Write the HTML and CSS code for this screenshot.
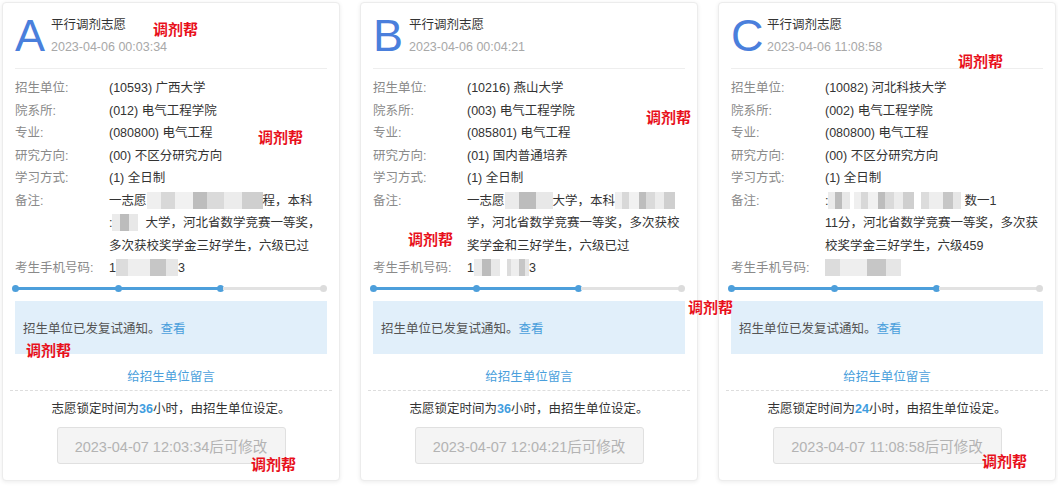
FILE: index.html
```html
<!DOCTYPE html>
<html lang="zh">
<head>
<meta charset="utf-8">
<title>平行调剂志愿</title>
<link rel="stylesheet" href="styles.css">
</head>
<body>
<div class="page">
  <div class="cards">
    <div class="card">
      <div class="head">
        <div class="letter">A</div>
        <div class="head-text">
          <div class="title">平行调剂志愿</div>
          <div class="date">2023-04-06 00:03:34</div>
        </div>
      </div>
      <div class="rows">
        <div class="row"><span class="lab">招生单位:</span><span class="val">(10593) 广西大学</span></div>
        <div class="row"><span class="lab">院系所:</span><span class="val">(012) 电气工程学院</span></div>
        <div class="row"><span class="lab">专业:</span><span class="val">(080800) 电气工程</span></div>
        <div class="row"><span class="lab">研究方向:</span><span class="val">(00) 不区分研究方向</span></div>
        <div class="row"><span class="lab">学习方式:</span><span class="val">(1) 全日制</span></div>
        <div class="row"><span class="lab">备注:</span><span class="val">一志愿<span class="blur w116 m1"></span>程，本科<br>:<span class="blur w26 m2"></span>&nbsp; 大学，河北省数学竞赛一等奖，<br>多次获校奖学金三好学生，六级已过</span></div>
        <div class="row"><span class="lab">考生手机号码:</span><span class="val">1<span class="blur w62 m3"></span>3</span></div>
      </div>
      <div class="steps"><span class="dot on"></span><span class="seg on"></span><span class="dot on"></span><span class="seg on"></span><span class="dot on"></span><span class="seg"></span><span class="dot"></span></div>
      <div class="notice">招生单位已发复试通知。<span class="link">查看</span></div>
      <div class="msg">给招生单位留言</div>
      <div class="lock">志愿锁定时间为<b>36</b>小时，由招生单位设定。</div>
      <div class="btn">2023-04-07 12:03:34后可修改</div>
    </div>

    <div class="card">
      <div class="head">
        <div class="letter">B</div>
        <div class="head-text">
          <div class="title">平行调剂志愿</div>
          <div class="date">2023-04-06 00:04:21</div>
        </div>
      </div>
      <div class="rows">
        <div class="row"><span class="lab">招生单位:</span><span class="val">(10216) 燕山大学</span></div>
        <div class="row"><span class="lab">院系所:</span><span class="val">(003) 电气工程学院</span></div>
        <div class="row"><span class="lab">专业:</span><span class="val">(085801) 电气工程</span></div>
        <div class="row"><span class="lab">研究方向:</span><span class="val">(01) 国内普通培养</span></div>
        <div class="row"><span class="lab">学习方式:</span><span class="val">(1) 全日制</span></div>
        <div class="row"><span class="lab">备注:</span><span class="val">一志愿<span class="blur w48 m2"></span>大学，本科<span class="blur w60 m1"></span><br>学，河北省数学竞赛一等奖，多次获校<br>奖学金和三好学生，六级已过</span></div>
        <div class="row"><span class="lab">考生手机号码:</span><span class="val">1<span class="blur w26 m2"></span>&nbsp;&nbsp;<span class="blur w22 m3"></span>3</span></div>
      </div>
      <div class="steps"><span class="dot on"></span><span class="seg on"></span><span class="dot on"></span><span class="seg on"></span><span class="dot on"></span><span class="seg"></span><span class="dot"></span></div>
      <div class="notice">招生单位已发复试通知。<span class="link">查看</span></div>
      <div class="msg">给招生单位留言</div>
      <div class="lock">志愿锁定时间为<b>36</b>小时，由招生单位设定。</div>
      <div class="btn">2023-04-07 12:04:21后可修改</div>
    </div>

    <div class="card">
      <div class="head">
        <div class="letter">C</div>
        <div class="head-text">
          <div class="title">平行调剂志愿</div>
          <div class="date">2023-04-06 11:08:58</div>
        </div>
      </div>
      <div class="rows">
        <div class="row"><span class="lab">招生单位:</span><span class="val">(10082) 河北科技大学</span></div>
        <div class="row"><span class="lab">院系所:</span><span class="val">(002) 电气工程学院</span></div>
        <div class="row"><span class="lab">专业:</span><span class="val">(080800) 电气工程</span></div>
        <div class="row"><span class="lab">研究方向:</span><span class="val">(00) 不区分研究方向</span></div>
        <div class="row"><span class="lab">学习方式:</span><span class="val">(1) 全日制</span></div>
        <div class="row"><span class="lab">备注:</span><span class="val">:<span class="blur w22 m2"></span>&nbsp;<span class="blur w60 m1"></span>&nbsp;&nbsp;<span class="blur w40 m3"></span> 数一1<br>11分，河北省数学竞赛一等奖，多次获<br>校奖学金三好学生，六级459</span></div>
        <div class="row"><span class="lab">考生手机号码:</span><span class="val"><span class="blur w76 m3"></span></span></div>
      </div>
      <div class="steps"><span class="dot on"></span><span class="seg on"></span><span class="dot on"></span><span class="seg on"></span><span class="dot on"></span><span class="seg"></span><span class="dot"></span></div>
      <div class="notice">招生单位已发复试通知。<span class="link">查看</span></div>
      <div class="msg">给招生单位留言</div>
      <div class="lock">志愿锁定时间为<b>24</b>小时，由招生单位设定。</div>
      <div class="btn">2023-04-07 11:08:58后可修改</div>
    </div>
  </div>

  <span class="wm wm1">调剂帮</span>
  <span class="wm wm2">调剂帮</span>
  <span class="wm wm3">调剂帮</span>
  <span class="wm wm4">调剂帮</span>
  <span class="wm wm5">调剂帮</span>
  <span class="wm wm6">调剂帮</span>
  <span class="wm wm7">调剂帮</span>
  <span class="wm wm8">调剂帮</span>
  <span class="wm wm9">调剂帮</span>
</div>
</body>
</html>
```

FILE: styles.css
```css
* { box-sizing: border-box; }
html, body { margin: 0; padding: 0; background: #fff; }
body {
  font-family: "Liberation Sans", "Noto Sans CJK SC", sans-serif;
  font-size: 12.5px;
  color: #333;
}
.page { position: relative; width: 1058px; height: 488px; overflow: hidden; }
.cards { display: flex; gap: 20px; padding: 2px 0 0 2px; }
.card {
  width: 338px;
  height: 479px;
  background: #fff;
  border: 1px solid #ececec;
  border-radius: 4px;
  box-shadow: 0 1px 4px rgba(0,0,0,0.08);
  padding: 11px 12px 0;
  display: flex;
  flex-direction: column;
}
.head {
  display: flex;
  align-items: center;
  padding-bottom: 10px;
  border-bottom: 1px solid #eeeeee;
}
.letter {
  width: 36px;
  font-family: "Liberation Sans", sans-serif;
  font-size: 45px;
  line-height: 44px;
  color: #4a7fdc;
}
.title { line-height: 22px; color: #333; }
.date { line-height: 22px; color: #a8a8a8; }
.rows { padding-top: 8px; }
.row { display: flex; line-height: 22.5px; }
.lab { width: 94px; flex: none; color: #8a8a8a; }
.val { color: #333; white-space: nowrap; }
.blur {
  display: inline-block;
  height: 17px;
  vertical-align: -4px;
}
.m1 { background: linear-gradient(90deg, #efefef 0 12%, #d8d8d8 12% 24%, #f1f1f1 24% 40%, #bdbdbd 40% 52%, #dadada 52% 66%, #ececec 66% 82%, #cfcfcf 82% 100%); }
.m2 { background: linear-gradient(90deg, #ebebeb 0 30%, #bcbcbc 30% 65%, #e8e8e8 65% 100%); }
.m3 { background: linear-gradient(90deg, #dcdcdc 0 20%, #eeeeee 20% 55%, #c6c6c6 55% 80%, #e6e6e6 80% 100%); }
.w22 { width: 22px; }
.w26 { width: 26px; }
.w40 { width: 40px; }
.w48 { width: 48px; }
.w60 { width: 60px; }
.w62 { width: 62px; }
.w76 { width: 76px; }
.w116 { width: 116px; }
.steps {
  display: flex;
  align-items: center;
  margin: 5px 0 0 -3px;
  height: 7px;
}
.dot { width: 7px; height: 7px; border-radius: 50%; background: #dcdcdc; flex: none; }
.dot.on { background: #4d9fdb; }
.seg { flex: 1; height: 3px; background: #e2e2e2; margin: 0 -1px; }
.seg.on { background: #4d9fdb; }
.notice {
  margin-top: 9px;
  height: 53px;
  background: #e1effa;
  display: flex;
  align-items: center;
  padding-left: 8px;
  color: #555;
}
.link { color: #4a9fdc; }
.msg {
  margin-top: 12px;
  line-height: 22px;
  text-align: center;
  color: #4a9fdc;
}
.lock {
  margin: 2px -5px 0;
  padding-top: 7px;
  border-top: 1px dashed #dddddd;
  line-height: 22px;
  text-align: center;
  color: #333;
}
.lock b { color: #3f9de0; font-weight: bold; }
.btn {
  margin: 7px auto 0;
  width: 229px;
  height: 37px;
  background: #f4f4f4;
  border: 1px solid #e0e0e0;
  border-radius: 3px;
  color: #b3b3b3;
  font-size: 14.5px;
  display: flex;
  align-items: center;
  justify-content: center;
}
.wm {
  position: absolute;
  font-family: "Noto Sans CJK SC", sans-serif;
  font-weight: bold;
  font-size: 15px;
  line-height: 15px;
  color: #e8101b;
  white-space: nowrap;
}
.wm1 { left: 153px; top: 21px; }
.wm2 { left: 258px; top: 129px; }
.wm3 { left: 26px; top: 342px; }
.wm4 { left: 251px; top: 456px; }
.wm5 { left: 646px; top: 109px; }
.wm6 { left: 408px; top: 231px; }
.wm7 { left: 688px; top: 299px; }
.wm8 { left: 958px; top: 53px; }
.wm9 { left: 982px; top: 453px; }
```
